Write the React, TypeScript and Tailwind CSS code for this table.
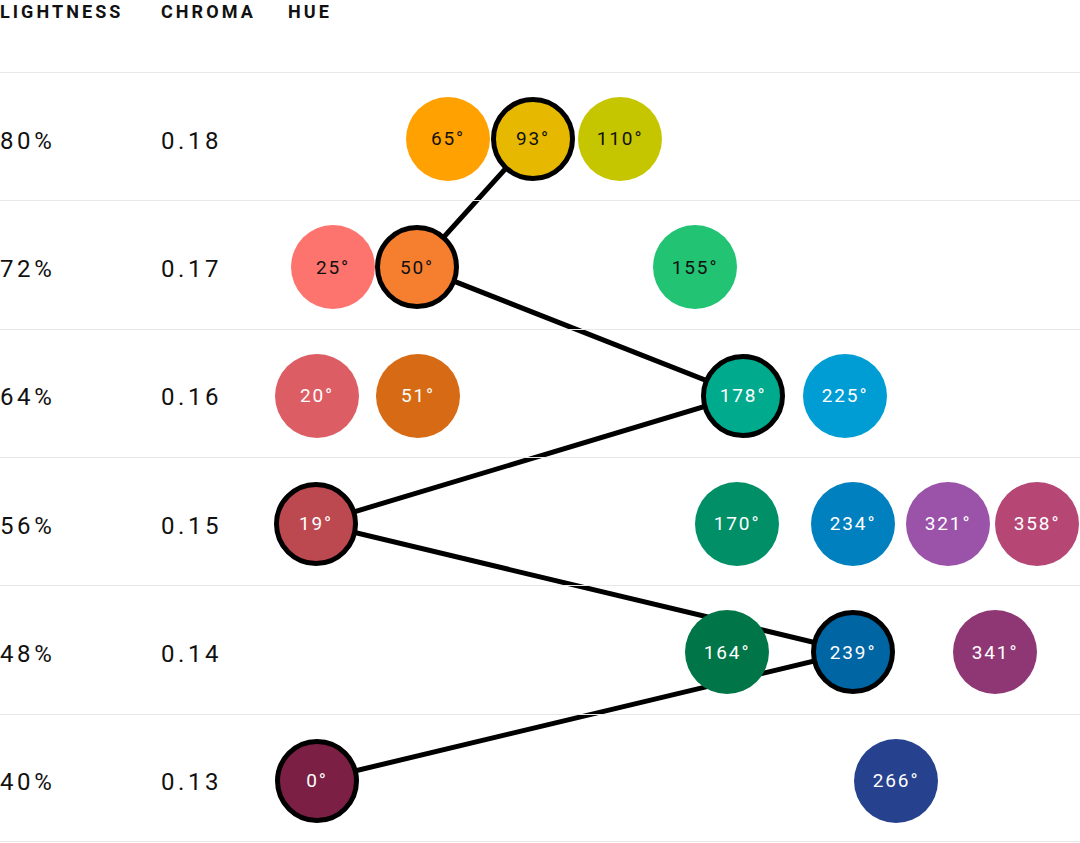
type Dot = { h: number; x: number; bg: string; on?: boolean };
type Row = { l: string; c: string; dark: boolean; dots: Dot[] };

const rows: Row[] = [
  {
    l: "80%", c: "0.18", dark: true,
    dots: [
      { h: 65, x: 448, bg: "bg-[oklch(80%_0.18_65)]" },
      { h: 93, x: 533, bg: "bg-[oklch(80%_0.18_93)]", on: true },
      { h: 110, x: 620, bg: "bg-[oklch(80%_0.18_110)]" },
    ],
  },
  {
    l: "72%", c: "0.17", dark: true,
    dots: [
      { h: 25, x: 333, bg: "bg-[oklch(72%_0.17_25)]" },
      { h: 50, x: 417, bg: "bg-[oklch(72%_0.17_50)]", on: true },
      { h: 155, x: 695, bg: "bg-[oklch(72%_0.17_155)]" },
    ],
  },
  {
    l: "64%", c: "0.16", dark: false,
    dots: [
      { h: 20, x: 317, bg: "bg-[oklch(64%_0.16_20)]" },
      { h: 51, x: 418, bg: "bg-[oklch(64%_0.16_51)]" },
      { h: 178, x: 743, bg: "bg-[oklch(64%_0.16_178)]", on: true },
      { h: 225, x: 845, bg: "bg-[oklch(64%_0.16_225)]" },
    ],
  },
  {
    l: "56%", c: "0.15", dark: false,
    dots: [
      { h: 19, x: 316, bg: "bg-[oklch(56%_0.15_19)]", on: true },
      { h: 170, x: 737, bg: "bg-[oklch(56%_0.15_170)]" },
      { h: 234, x: 853, bg: "bg-[oklch(56%_0.15_234)]" },
      { h: 321, x: 948, bg: "bg-[oklch(56%_0.15_321)]" },
      { h: 358, x: 1037, bg: "bg-[oklch(56%_0.15_358)]" },
    ],
  },
  {
    l: "48%", c: "0.14", dark: false,
    dots: [
      { h: 164, x: 727, bg: "bg-[oklch(48%_0.14_164)]" },
      { h: 239, x: 853, bg: "bg-[oklch(48%_0.14_239)]", on: true },
      { h: 341, x: 995, bg: "bg-[oklch(48%_0.14_341)]" },
    ],
  },
  {
    l: "40%", c: "0.13", dark: false,
    dots: [
      { h: 0, x: 317, bg: "bg-[oklch(40%_0.13_0)]", on: true },
      { h: 266, x: 896, bg: "bg-[oklch(40%_0.13_266)]" },
    ],
  },
];

// path through the picked hue of each row
const path = "533,138.3 417,266.7 743,395 316,523.3 853,651.7 317,780";

export default function App() {
  return (
    <div className="relative w-[1080px] bg-white text-[#111] font-[family-name:Roboto,sans-serif]">
      <svg className="pointer-events-none absolute left-0 top-0" width="1080" height="843">
        <polyline points={path} fill="none" stroke="#000" strokeWidth="5" />
      </svg>

      {/* header */}
      <div className="flex h-[72px] pt-px text-lg leading-[21px] font-bold uppercase tracking-[0.17em]">
        <div className="w-[161px]">Lightness</div>
        <div className="w-[127px]">Chroma</div>
        <div>Hue</div>
      </div>

      {rows.map((r, i) => (
        <div
          key={r.l}
          className={`relative flex h-[128.33px] items-center border-t border-[#e8e8e8] pt-2 text-2xl tracking-[0.15em] ${i === rows.length - 1 ? "border-b" : ""}`}
        >
          <div className="w-[161px]">{r.l}</div>
          <div>{r.c}</div>
          {r.dots.map((d) => (
            <div
              key={d.h}
              style={{ left: d.x - 42 }}
              className={`absolute top-[24px] z-10 flex h-[84px] w-[84px] items-center justify-center rounded-full text-[19px] tracking-[0.1em] ${d.bg} ${d.on ? "border-[5px] border-black" : ""} ${r.dark ? "text-[#111]" : "text-white"}`}
            >
              {d.h}°
            </div>
          ))}
        </div>
      ))}
    </div>
  );
}
